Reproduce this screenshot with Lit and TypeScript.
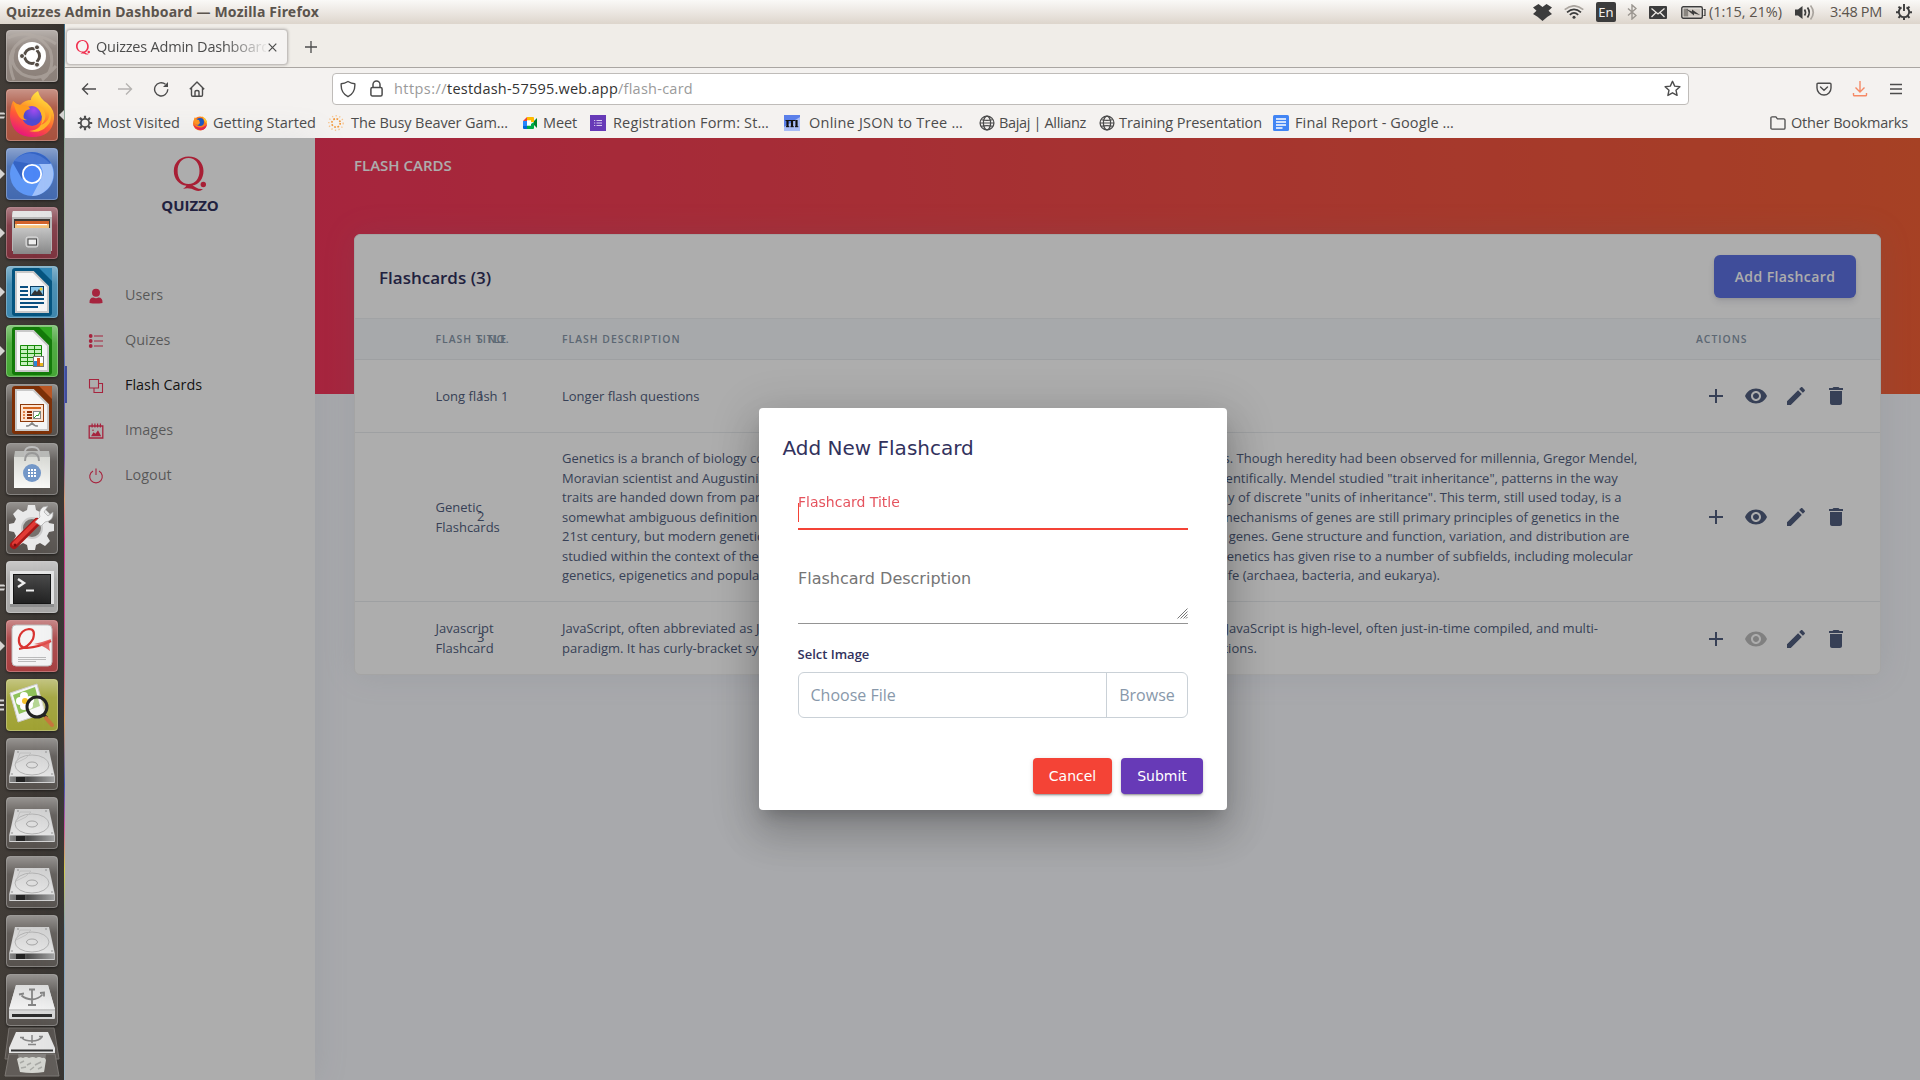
import { LitElement, html, css, svg, nothing } from "lit";
import { customElement, property } from "lit/decorators.js";
import { styleMap } from "lit/directives/style-map.js";

/** One line of text whose letter spacing is adjusted to fill a given width. */
@customElement("fit-label")
class FitLabel extends LitElement {
  @property({ type: Number }) width = 0;
  @property() text = "";
  static styles = css`
    :host { display: block; flex: none; white-space: nowrap; }
    span { display: inline-block; white-space: pre; }
  `;
  updated() {
    const s = this.renderRoot.querySelector("span") as HTMLElement;
    s.style.letterSpacing = "0px";
    const natural = s.getBoundingClientRect().width;
    s.style.letterSpacing = (this.width - natural) / this.text.length + "px";
  }
  render() {
    return html`<span>${this.text}</span>`;
  }
}

/* ---------- desktop launcher ---------- */

const gloss = svg`<rect x=".5" y=".5" width="51" height="51" rx="3.5" fill="url(#gloss)" stroke="#fff" stroke-opacity=".28"/>`;

const officeDoc = (dark: string, mid: string, inner: unknown) => svg`
  <path d="M9 2h29l8 9v36a3 3 0 0 1-3 3H9a3 3 0 0 1-3-3V5a3 3 0 0 1 3-3z" fill="${dark}"/>
  <path d="M33 2h13v13z" fill="${mid}"/>
  <path d="M9 5h19l15 15v27H9z" fill="#c9c9c9"/><path d="M11 7h16l14 14v24H11z" fill="#f7f7f7"/>
  <path d="M28 5l15 15V16L32 5z" fill="${dark}"/>${inner}`;

const drive = svg`
  <path d="M9 12h34l6 27v5a1 1 0 0 1-1 1H4a1 1 0 0 1-1-1v-5z" fill="#d4d4d4"/>
  <path d="M10 12h32l6 26H4z" fill="url(#plate)"/>
  <path d="M3.500 38.500h45v5.500h-45z" fill="url(#edge)"/><path d="M10 39h9v5h-9z" fill="#222"/>
  <ellipse cx="26" cy="27" rx="17" ry="10" fill="none" stroke="#b3b3b3"/>
  <path d="M14 15h11l-5 5-10 5z" fill="none" stroke="#bbb" stroke-width=".8"/>
  <ellipse cx="26" cy="27" rx="5.500" ry="3" fill="#dedede" stroke="#a5a5a5"/>
  <circle cx="12" cy="14" r=".8" fill="#888"/><circle cx="40" cy="14" r=".8" fill="#888"/><circle cx="6" cy="36" r=".8" fill="#888"/><circle cx="46" cy="36" r=".8" fill="#888"/>`;

const usb = svg`
  <path d="M10 11h32l7 25v8a1 1 0 0 1-1 1H4a1 1 0 0 1-1-1v-8z" fill="#d8d8d8"/>
  <path d="M10 11h32l7 24H3z" fill="url(#plate2)"/><path d="M3 35.500h46v1H3z" fill="#b5b5b5"/>
  <rect x="6" y="40" width="40" height="3" fill="#2c2c2c"/>
  <path d="M26 15v15M22 31h8M23 15.500h6M15.500 21.500q4 3.500 10.500 4 6.500-.5 10.500-5" fill="none" stroke="#848484" stroke-width="1.800"/>
  <path d="M13 20.500l5-1M34 19l4-.5v4" fill="none" stroke="#848484" stroke-width="1.800"/>`;

interface Tile { bg: string; art: unknown; left?: number; right?: boolean; }

const tiles: Tile[] = [
  { bg: "#8b8079", art: svg`
    <path d="M2 8Q28-4 44 20 50 40 36 50M50 36Q36 54 16 44 2 34 8 20M8 50Q-2 24 14 12 30 0 50 14" fill="none" stroke="#b5ada7" stroke-width="3" opacity=".6"/>
    <circle cx="26" cy="26" r="14" fill="#fff"/><circle cx="26" cy="26" r="7.500" fill="none" stroke="#554d46" stroke-width="3"/>
    <g stroke="#fff" stroke-width="1.600"><path d="M26 26l-14 0M26 26l7-12M26 26l7 12"/></g><circle cx="26" cy="26" r="5.600" fill="#fff"/>
    <circle cx="16" cy="26" r="2.500" fill="#554d46" stroke="#fff"/><circle cx="31" cy="17.300" r="2.500" fill="#554d46" stroke="#fff"/><circle cx="31" cy="34.700" r="2.500" fill="#554d46" stroke="#fff"/>` },
  { bg: "#a8513d", left: 2, right: true, art: svg`
    <path d="M7 12q3 3 7 4 5-5 11-5 0-5 7-9 2 8 9 12 8 7 7 16-2 18-22 18Q6 47 4 28 4 18 7 12z" fill="url(#fox)"/>
    <circle cx="26" cy="27" r="10" fill="url(#globe)"/>
    <path d="M7 12q3 4 9 4 7 0 8 4-5 1-6 5-2 5 3 6-6 1-9-5-3-5-5-14z" fill="#ff9a1f"/>
    <path d="M27 16q9-1 12 8 2 6-4 12 13-6 6-19 8 12 0 20-7 8-18 5 14-1 13-14-1-8-9-12z" fill="#ffb52a"/>` },
  { bg: "#4269b0", left: 1, art: svg`
    <circle cx="26" cy="26" r="22" fill="#5e97f6"/><path d="M7 15A22 22 0 0 1 45 15L26 16 16 31z" fill="#3564c4"/><path d="M8 13Q24-4 45 16H26z" fill="#4b78d4"/>
    <path d="M45 16a22 22 0 0 1-19 32l9-17q4-8-2-15z" fill="#a1c2fa"/><circle cx="26" cy="26" r="9.200" fill="#4d87f6" stroke="#fff" stroke-width="1.800"/>` },
  { bg: "#7c303b", left: 1, art: svg`
    <path d="M6 6q0-2 2-2h36q2 0 2 2v38H6z" fill="#b8b8b8"/><path d="M6 10l1-6h38l1 6z" fill="#e5e5e5"/><rect x="8" y="12" width="36" height="9" fill="#3d3733"/>
    <path d="M9 14h34v7H9z" fill="#d3632a"/><path d="M9 17h34v4H9z" fill="#f6c37a"/><path d="M11 17h30v1.200H11z" fill="#fff"/>
    <path d="M7 21h38v26H7z" fill="url(#cab)"/><rect x="20" y="30" width="12" height="10" rx="2" fill="#bdbdbd" stroke="#ddd"/><rect x="22" y="32" width="8.500" height="6" fill="#eee" stroke="#444"/>` },
  { bg: "#3c87ae", left: 1, art: officeDoc("#04547f", "#2e86b5", svg`
    <path d="M14 21h8M14 25h8M14 29h8M14 33h24M14 37h24M14 41h18" stroke="#0a4f80" stroke-width="2"/>
    <rect x="24.500" y="20.500" width="13" height="9" fill="#87c6ea" stroke="#0a3f66"/><path d="M25 29l4-5 2 2 2-3 4 6z" fill="#333"/><circle cx="35" cy="23" r="1.500" fill="#f3d02e"/>`) },
  { bg: "#43a632", left: 1, art: officeDoc("#127a08", "#2fa81f", svg`
    <rect x="14" y="20" width="22" height="21" fill="#c5f0bd"/><path d="M14.500 20.500h21v20h-21zM14 24.500h22M14 28.500h22M14 32.500h22M14 36.500h22M21.500 20v21M28.500 20v21" fill="none" stroke="#178a0a"/>
    <rect x="27.500" y="31.500" width="10" height="10" fill="#fff" stroke="#777"/><path d="M28 36h3v5h-3z" fill="#2a86d8"/><path d="M31 33h3v8h-3z" fill="#d8541c"/><path d="M34 38h3v3h-3z" fill="#e8b81c"/>`) },
  { bg: "#56504b", art: officeDoc("#7d2f06", "#bb5622", svg`
    <rect x="14.500" y="20.500" width="23" height="17" fill="#fde3d0" stroke="#8d3a0b"/><path d="M17 24h18" stroke="#d4651f" stroke-width="2"/>
    <path d="M17 28h2M17 31h2M17 34h2" stroke="#e08248" stroke-width="2"/><path d="M21 28h5M21 31h5M21 34h5" stroke="#8d2f05" stroke-width="2"/>
    <rect x="27.500" y="27.500" width="7" height="7" fill="#fff" stroke="#888"/><path d="M28 34l3-3 1 1 2-4" fill="none" stroke="#2a9a2a"/><path d="M26 38v2M20 42q4 0 6-3 2 3 6 3" fill="none" stroke="#888" stroke-width="1.500"/>`) },
  { bg: "#57524e", art: svg`
    <path d="M9 8h34l1 6H8z" fill="#b9bab7"/><path d="M19 16V8q1-4 7-4t7 4v8" fill="none" stroke="#bdbdbd" stroke-width="1.800"/>
    <path d="M8 14h36v31H8z" fill="url(#bag)"/><path d="M19 18q0-8 7-8t7 8" fill="none" stroke="#999" stroke-width="2"/>
    <circle cx="26" cy="30" r="9" fill="#7397c8"/><path d="M22 27h2m1 0h2m1 0h2M22 30h2m1 0h2m1 0h2M22 33h2m1 0h2m1 0h2" stroke="#fff" stroke-width="2"/>` },
  { bg: "#57524e", art: svg`
    <path d="M21 8l1-5h7l1 5 4 2 5-3 5 5-3 5 2 4 5 1v7l-5 1-2 4 3 5-5 5-5-3-4 2-1 5h-7l-1-5-4-2-5 3-5-5 3-5-2-4-5-1v-7l5-1 2-4-3-5 5-5 5 3z" fill="#e9e9e9"/>
    <circle cx="26" cy="26" r="10" fill="#77716d" stroke="#cacaca" stroke-width="2"/>
    <path d="M8 43L31 20" stroke="#a91818" stroke-width="8" stroke-linecap="round"/><path d="M8 42L31 19" stroke="#e23a35" stroke-width="4" stroke-linecap="round"/>
    <path d="M29 20l5-5q-2-6 3-10l5-1-4 6 4 4 5-4q1 9-8 10l-4 4z" fill="#f3f3f3" stroke="#aaa" stroke-width=".7"/><circle cx="9" cy="43" r="1.500" fill="#741010"/>` },
  { bg: "#a8a7a6", left: 2, art: svg`
    <path d="M4 10h44v36H4z" fill="#e6e6e6"/><path d="M4 43h44v3H4z" fill="#8d8d8d"/><rect x="7.500" y="13.500" width="37" height="29" fill="url(#term)" stroke="#141414"/>
    <path d="M12 18l6 4-6 4" fill="none" stroke="#eee" stroke-width="2.400"/><path d="M20 29.500h8" stroke="#eee" stroke-width="2"/>` },
  { bg: "#a83e3f", left: 1, art: svg`
    <rect x="6" y="5" width="40" height="41" rx="4" fill="#f4f4f4" stroke="#bdbdbd"/>
    <path d="M13 29Q22 28 27 19 30 9 23 9 15 10 13 18q-1 10 8 10 12-1 24-7" fill="none" stroke="#d93431" stroke-width="2.200"/><path d="M28 24q9-2 17-5-3 6-1 12-7-6-16-7z" fill="#e2504d" opacity=".85"/>
    <path d="M12 37.500h28M12 39.500h28M12 41.500h18" stroke="#bbb"/>` },
  { bg: "#a0a233", left: 3, art: svg`
    <path d="M4 14l27-9 8 29-27 9z" fill="#f4f4f4" stroke="#ccc"/><path d="M7 16l22-8 5 19-21 8z" fill="#8fc25b"/>
    <g fill="#fff"><circle cx="18" cy="17" r="4"/><circle cx="24" cy="21" r="4"/><circle cx="14" cy="22" r="4"/><circle cx="18" cy="27" r="4"/><circle cx="23" cy="26" r="4"/></g><circle cx="19" cy="22" r="3" fill="#f4c22c"/>
    <circle cx="31" cy="28" r="10" fill="#fff" fill-opacity=".35" stroke="#222" stroke-width="3"/><path d="M38 36l3 3" stroke="#222" stroke-width="3"/><path d="M40 39l6 7" stroke="#c9763a" stroke-width="4" stroke-linecap="round"/>` },
  { bg: "#57524e", art: drive }, { bg: "#57524e", art: drive }, { bg: "#57524e", art: drive }, { bg: "#57524e", art: drive },
  { bg: "#57524e", art: usb },
];

@customElement("desk-launcher")
class DeskLauncher extends LitElement {
  static styles = css`
    :host { display: flex; flex-direction: column; gap: 7px; width: 64px; height: 1056px; box-sizing: border-box; padding-top: 6px; overflow: hidden;
      background: linear-gradient(90deg, #423d38, #3c3733 60%, #35312d); }
    .row { display: flex; align-items: center; height: 52px; flex: none; }
    .side { width: 6px; height: 52px; flex: none; }
    .tile { width: 52px; height: 52px; flex: none; filter: drop-shadow(0 1px 1px rgba(0, 0, 0, .45)); }
    .fold { width: 56px; height: 50px; flex: none; margin: -6px 0 0 4px; }
  `;
  private grads() {
    return svg`<defs>
      <linearGradient id="gloss" x2="0" y2="1"><stop offset="0" stop-color="#fff" stop-opacity=".38"/><stop offset=".35" stop-color="#fff" stop-opacity=".08"/><stop offset="1" stop-color="#fff" stop-opacity="0"/></linearGradient>
      <linearGradient id="plate" x2="0" y2="1"><stop offset="0" stop-color="#d0d0d0"/><stop offset="1" stop-color="#e6e6e6"/></linearGradient>
      <linearGradient id="plate2" x2="0" y2="1"><stop offset="0" stop-color="#dcdcdc"/><stop offset="1" stop-color="#f2f2f2"/></linearGradient>
      <linearGradient id="edge"><stop offset="0" stop-color="#888"/><stop offset=".4" stop-color="#4a4a4a"/><stop offset="1" stop-color="#a5a5a5"/></linearGradient>
      <linearGradient id="cab" x2="0" y2="1"><stop offset="0" stop-color="#c5c5c5"/><stop offset="1" stop-color="#888"/></linearGradient>
      <linearGradient id="bag" x2="0" y2="1"><stop offset="0" stop-color="#d9dad5"/><stop offset="1" stop-color="#fafaf8"/></linearGradient>
      <linearGradient id="term" x2="0" y2="1"><stop offset="0" stop-color="#4a4a4a"/><stop offset="1" stop-color="#202020"/></linearGradient>
      <linearGradient id="fox" x1=".8" y1="0" x2=".35" y2="1"><stop offset="0" stop-color="#fff04a"/><stop offset=".35" stop-color="#ffb02c"/><stop offset=".65" stop-color="#ff5a35"/><stop offset="1" stop-color="#e8167c"/></linearGradient>
      <radialGradient id="globe" cx=".6" cy=".2"><stop offset="0" stop-color="#a44af0"/><stop offset="1" stop-color="#4e4ad0"/></radialGradient>
    </defs>`;
  }
  private marks(n = 0) {
    if (n === 1) return svg`<path d="M0 21l5 5-5 5z" fill="#d6d4d2"/>`;
    if (n === 2) return svg`<path d="M0 23.500h4l1 1v1H0zM0 27.500h5l-1 2H0z" fill="#d6d4d2"/>`;
    if (n === 3) return svg`<path d="M0 20.500h4v2H0zM0 25h4v2H0zM0 29.500h4v2H0z" fill="#d6d4d2"/>`;
    return nothing;
  }
  render() {
    return html`
      ${tiles.map((t) => html`<div class="row">
        <svg class="side" viewBox="0 0 6 52">${this.marks(t.left)}</svg>
        <svg class="tile" viewBox="0 0 52 52">${this.grads()}<rect width="52" height="52" rx="4" fill="${t.bg}"/>${gloss}${t.art}</svg>
        <svg class="side" viewBox="0 0 6 52">${t.right ? svg`<path d="M6 21l-5 5 5 5z" fill="#d6d4d2"/>` : nothing}</svg>
      </div>`)}
      <svg class="fold" viewBox="0 0 56 50">${this.grads()}
        <path d="M5 1h45l5 31H1z" fill="#57524e" stroke="#77726e"/><path d="M5 27h46l4 22H1z" fill="#615c58" stroke="#7d7874"/>
        <path d="M14 27h28l-2 18H16z" fill="#85827f"/><path d="M13 32q3-3 6-1 3-2 6 0 4-2 7 0 3-2 6 0 3-1 4 2l-2 12q-12 2-24 0z" fill="#d4d5d0"/><path d="M16 36l4-2m3 4l4-2m4 2l6-3M17 41l5-1m4 3l4-3m4 2l4-2" stroke="#a9aaa6" stroke-width="1.500"/>
        <path d="M12 5h32l7 16v5H5v-5z" fill="#e6e6e6"/><path d="M7 22.500h42v2H7z" fill="#333"/><path d="M28 8v8M24 17.500h8M18 11q3 3 10 3t10-4M16 10.500h4M35 9.500h4" fill="none" stroke="#868686" stroke-width="1.500"/>
      </svg>`;
  }
}

/* ---------- system panel ---------- */

@customElement("system-panel")
class SystemPanel extends LitElement {
  static styles = css`
    :host { display: flex; align-items: center; height: 24px; box-sizing: border-box; padding: 0 8px 0 6px; color: #5b544d;
      background: linear-gradient(#faf9f7, #ece7e2 50%, #ddd5cc); font: 14.500px/24px "Open Sans", sans-serif; }
    .title { font: 700 14px/24px "Noto Sans", sans-serif; flex: 1; }
    .tray { display: flex; align-items: center; }
    svg { display: block; flex: none; }
    .lang { width: 20px; height: 20px; border-radius: 2px; background: #3c3c3c; color: #f3f1ee; text-align: center; font: 13px/20px "Noto Sans", sans-serif; margin-right: 11px; }
    .clock { margin-right: 14px; }
    .bt, .drop { margin-right: 12px; }
    .mail { margin-right: 14px; }
    .wifi { margin-right: 12px; }
    .bat { margin-right: 3px; }
    .vol { margin: 0 15px 0 13px; }
  `;
  render() {
    return html`
      <div class="title"><fit-label .width=${313} .text=${"Quizzes Admin Dashboard — Mozilla Firefox"}></fit-label></div>
      <div class="tray">
        <svg class="drop" width="19" height="17" viewBox="0 0 19 17" fill="#3c3c3c"><path d="M5.500 0L9.500 3 13.500 0 19 3.600 15.500 6.800 19 10 14.500 12.800 9.500 17 4.500 12.800 0 10 3.500 6.800 0 3.600z"/></svg>
        <svg class="wifi" width="20" height="14" viewBox="0 0 20 14" fill="none" stroke="#3c3c3c" stroke-width="1.700"><path d="M.7 4.700Q10-3 19.300 4.700" stroke="#aaa59f"/><path d="M3 7.300Q10 1.300 17 7.300M5.800 9.800Q10 6 14.200 9.800"/><circle cx="10" cy="12.300" r="1.500" fill="#3c3c3c" stroke="none"/></svg>
        <div class="lang">En</div>
        <svg class="bt" width="10" height="16" viewBox="0 0 10 16" fill="none" stroke="#9a958f" stroke-width="1.400"><path d="M1 4.500l8 7L5 15V1l4 3.500-8 7"/></svg>
        <svg class="mail" width="18" height="13" viewBox="0 0 18 13"><rect width="18" height="13" rx="1" fill="#3c3c3c"/><path d="M2.500 2.500L9 8l6.500-5.500M2.500 11L7 6.500M15.500 11L11 6.500" fill="none" stroke="#ece8e3" stroke-width="1.300"/></svg>
        <svg class="bat" width="25" height="13" viewBox="0 0 25 13"><rect x=".8" y=".8" width="20.500" height="11.400" rx="1.500" fill="none" stroke="#3c3c3c" stroke-width="1.400"/><rect x="2.500" y="2.500" width="5" height="8" fill="#8a8680"/><path d="M7.500 2.500h12v8h-12z" fill="#cfc9c2"/><path d="M22.500 3.500h1.500v6h-1.500" fill="none" stroke="#3c3c3c" stroke-width="1.200"/><path d="M5 3l6 2.500V3.500l8 5.500-6-1.500v2z" fill="#3c3c3c"/></svg>
        <fit-label .width=${73} .text=${"(1:15, 21%)"}></fit-label>
        <svg class="vol" width="20" height="17" viewBox="0 0 20 17"><path d="M0 5.500h3L7.500 2v13L3 11.500H0z" fill="#3c3c3c"/><path d="M9.500 5.500q2 3 0 6M12.500 3.500q3.500 5 0 10" fill="none" stroke="#3c3c3c" stroke-width="1.700"/><path d="M15.500 1.500q5.500 7 0 14" fill="none" stroke="#aaa59f" stroke-width="1.700"/></svg>
        <div class="clock"><fit-label .width=${52} .text=${"3:48 PM"}></fit-label></div>
        <svg width="16" height="16" viewBox="0 0 16 16" fill="none" stroke="#3c3c3c"><path d="M5.500 3.400a5.200 5.200 0 1 0 5 0" stroke-width="1.900"/><path d="M8 0v7" stroke-width="1.900"/><path d="M8 13.500V16M2.600 8.200H0M13.400 8.200H16M4.300 12l-1.800 1.900M11.700 12l1.800 1.900M4.300 4.400L2.500 2.600M11.700 4.400l1.800-1.800" stroke-width="2"/></svg>
      </div>`;
  }
}

/* ---------- browser chrome ---------- */

const globeIcon = svg`<g fill="none" stroke="#4c4c4c" stroke-width="1.300"><circle cx="8" cy="8" r="6.900"/><ellipse cx="8" cy="8" rx="3.600" ry="6.900"/><path d="M1 8h14M2.500 4.700Q8 6 13.500 4.700M2.500 11.300Q8 10 13.500 11.300" stroke-width="1.100"/></g>`;

interface Bookmark { icon: unknown; label: string; slot: number; lead: number; width: number; }

const bookmarks: Bookmark[] = [
  { label: "Most Visited", slot: 115, lead: 20, width: 83, icon: svg`<circle cx="8" cy="8" r="4.200" fill="none" stroke="#4c4c4c" stroke-width="1.800"/><path d="M8 .8v3M8 12.200v3M.8 8h3M12.200 8h3M2.900 2.900L5 5M11 11l2.100 2.100M13.100 2.900L11 5M5 11l-2.100 2.100" stroke="#4c4c4c" stroke-width="2.200"/>` },
  { label: "Getting Started", slot: 136, lead: 21, width: 103, icon: svg`<circle cx="8" cy="8.500" r="7" fill="#ff7a1a"/><path d="M1 9q2 6 8 6.300Q14 15 15 9q-1 2-4 3-6 2-10-3z" fill="#e8254a"/><path d="M10 1q5 3 5 8-3-3-4-6z" fill="#ffc92c"/><circle cx="8" cy="7" r="4" fill="#1c55c0"/><path d="M3 2q1 3 4 3l1 3-2 2Q1 9 2 4z" fill="#ff9420"/>` },
  { label: "The Busy Beaver Gam…", slot: 194, lead: 23, width: 157, icon: svg`<g fill="none" stroke="#f2983a" stroke-width="1.700" stroke-dasharray="1.700 1.600"><circle cx="8" cy="8" r="4.200"/><circle cx="8" cy="8" r="7.200" stroke="#f7c48e" stroke-width="1.400" stroke-dasharray="1.300 2.400"/></g>` },
  { label: "Meet", slot: 68, lead: 21, width: 34, icon: svg`<path d="M1 6l4-4v4z" fill="#ea4335"/><path d="M1 6h4v5H1z" fill="#2684fc"/><path d="M1 11h4v3H2q-1 0-1-1z" fill="#0066da"/><path d="M5 2h6q1 0 1 1v4H9V5.500H5z" fill="#ffba00"/><path d="M5 14v-3.500h4V9l3-2v6q0 1-1 1z" fill="#00ac47"/><path d="M5 5.500h4v5H5z" fill="#fff"/><path d="M12 6l3-3v10l-3-3z" fill="#00832d"/>` },
  { label: "Registration Form: St…", slot: 194, lead: 23, width: 156, icon: svg`<path d="M0 0h16v16H0z" fill="#673ab7"/><path d="M4 5.500h1.200M4 8h1.200M4 10.500h1.200M6.500 5.500H12M6.500 8H12M6.500 10.500H12" stroke="#d6c8ee" stroke-width="1.100"/>` },
  { label: "Online JSON to Tree …", slot: 195, lead: 25, width: 154, icon: svg`<path d="M0 0h16v16H0z" fill="#a9bdf7"/><path d="M0 0h16v2L0 12z" fill="#5b80ea"/><path d="M3.500 5v7M8 5v7M12.500 5v7" stroke="#111" stroke-width="2.200"/><path d="M1.500 5.500h10M2 11.700h3.300M6.500 11.700h3.300M11 11.700h3.300" stroke="#111"/>` },
  { label: "Bajaj | Allianz", slot: 120, lead: 20, width: 87, icon: globeIcon },
  { label: "Training Presentation", slot: 174, lead: 20, width: 143, icon: globeIcon },
  { label: "Final Report - Google …", slot: 200, lead: 22, width: 159, icon: svg`<rect width="16" height="16" rx="1.500" fill="#4285f4"/><path d="M3 4h10M3 7h10M3 10h10M3 13h6.500" stroke="#fff" stroke-width="1.700"/>` },
];

@customElement("browser-chrome")
class BrowserChrome extends LitElement {
  static styles = css`
    :host { display: block; height: 114px; background: #f4f2f0; color: #4c4c4c; font: 14.500px/20px "Open Sans", sans-serif; }
    svg { display: block; flex: none; }
    .tabs { display: flex; align-items: center; height: 44px; background: #f0ede8; border-bottom: 1px solid #aaa6a2; padding: 4px 0 1px 1px; box-sizing: border-box; }
    .tab { width: 222px; height: 36px; box-sizing: border-box; background: #f5f3f2; border-radius: 4px; border: 1px solid #c4c0bd; box-shadow: 0 0 3px rgba(0, 0, 0, .28); display: flex; align-items: center; padding-left: 9px; }
    .tabtext { width: 170px; margin: 0 2px 0 6px; overflow: hidden; mask-image: linear-gradient(90deg, #000 75%, transparent 102%); -webkit-mask-image: linear-gradient(90deg, #000 75%, transparent 102%); }
    .plus { margin-left: 17px; }
    .nav { display: flex; align-items: center; height: 39px; padding: 1px 16px 0 16px; }
    .nav .b { margin-right: 20px; }
    .url { display: flex; align-items: center; height: 32px; width: 1357px; flex: none; box-sizing: border-box; background: #fff; border: 1px solid #bfbcb9; border-radius: 4px; margin-left: 127px; padding: 0 7px; font-size: 14.500px; color: #9a9a9a; }
    .lock { margin: 0 11px 0 14px; }
    .url .dark { color: #333; }
    .grow { flex: 1; }
    .right { display: flex; align-items: center; margin-left: auto; gap: 20px; }
    .marks { display: flex; align-items: center; height: 30px; padding: 0 12px 0 12px; border-bottom: 1px solid #c9c6c3; }
    .mark { display: flex; align-items: center; flex: none; }
    .folder { margin-right: 5px; }
  `;
  render() {
    return html`
      <div class="tabs">
        <div class="tab">
          <svg width="14" height="15" viewBox="0 0 34 36" fill="#f0304f"><path fill-rule="evenodd" d="M16 0C6 0 0 7 0 15s6 14 15 15l-4 3q8-2 13 2 5 1 7-2-4 1-9-3 9-5 9-14C31 7 25 0 16 0zm0 2c7 0 11 6 11 13s-4 13-11 13S4 22 4 15 9 2 16 2z"/><circle cx="31" cy="29" r="3"/></svg>
          <div class="tabtext"><fit-label .width=${174} .text=${"Quizzes Admin Dashboard"}></fit-label></div>
          <svg width="9" height="9" viewBox="0 0 9 9"><path d="M.7.7l7.600 7.600M8.300.7L.7 8.300" stroke="#4c4c4c" stroke-width="1.200"/></svg>
        </div>
        <svg class="plus" width="12" height="12" viewBox="0 0 12 12"><path d="M6 0v12M0 6h12" stroke="#4c4c4c" stroke-width="1.300"/></svg>
      </div>
      <div class="nav">
        <svg class="b" width="16" height="16" viewBox="0 0 16 16" fill="none" stroke="#4c4c4c" stroke-width="1.400"><path d="M15 8H1.500M7 2.500L1.500 8 7 13.500"/></svg>
        <svg class="b" width="16" height="16" viewBox="0 0 16 16" fill="none" stroke="#b5b3b1" stroke-width="1.400"><path d="M1 8h13.500M9 2.500L14.500 8 9 13.500"/></svg>
        <svg class="b" width="16" height="16" viewBox="0 0 16 16" fill="none" stroke="#4c4c4c" stroke-width="1.400"><path d="M14.800 8.300A6.600 6.600 0 1 1 12.500 3.300"/><path d="M15 1v5h-5z" fill="#4c4c4c" stroke="none"/></svg>
        <svg width="16" height="16" viewBox="0 0 16 16" fill="none" stroke="#4c4c4c" stroke-width="1.400" stroke-linejoin="round"><path d="M.8 8.200L8 1l7.200 7.200M2.500 7v7q0 1.200 1.200 1.200h8.600q1.200 0 1.200-1.200V7M6 15V11q0-1.500 2-1.500t2 1.500v4"/></svg>
        <div class="url">
          <svg width="16" height="18" viewBox="0 0 16 18" fill="none" stroke="#4c4c4c" stroke-width="1.400" stroke-linejoin="round"><path d="M8 1.500q3.500 2 6.800 2.300Q15.500 13 8 16.700.5 13 1.200 3.800 4.500 3.500 8 1.500z"/></svg>
          <svg class="lock" width="13" height="17" viewBox="0 0 13 17" fill="none" stroke="#4c4c4c" stroke-width="1.500"><rect x=".9" y="7.500" width="11.200" height="8.500" rx="1.500"/><path d="M3 7.500V4.500a3.500 3.500 0 0 1 7 0v3"/></svg>
          <fit-label .width=${53} .text=${"https://"}></fit-label><fit-label class="dark" .width=${171} .text=${"testdash-57595.web.app"}></fit-label><fit-label .width=${75} .text=${"/flash-card"}></fit-label>
          <span class="grow"></span>
          <svg width="17" height="17" viewBox="0 0 17 17" fill="none" stroke="#4c4c4c" stroke-width="1.400" stroke-linejoin="round"><path d="M8.500 1.300l2.200 4.800 5.200.6-3.900 3.500 1.100 5.200-4.600-2.600-4.600 2.600L5 10.200 1.100 6.700l5.200-.6z"/></svg>
        </div>
        <div class="right">
          <svg width="16" height="16" viewBox="0 0 16 16" fill="none" stroke="#4c4c4c" stroke-width="1.400"><path d="M1 3.200q0-1 1-1h12q1 0 1 1V7a7 7 0 0 1-14 0z"/><path d="M4.500 6L8 9.300 11.500 6" stroke-linecap="round"/></svg>
          <svg width="16" height="16" viewBox="0 0 16 16" fill="none" stroke="#f58a66" stroke-width="1.400"><path d="M8 0v11M3.500 6.500L8 11l4.500-4.500M1.500 12v2q0 .8 1 .8h11q1 0 1-.8v-2"/></svg>
          <svg width="16" height="16" viewBox="0 0 16 16" stroke="#4c4c4c" stroke-width="1.300"><path d="M2 3.500h12M2 8h12M2 12.500h12"/></svg>
        </div>
      </div>
      <div class="marks">
        ${bookmarks.map((b) => html`<div class="mark" style=${styleMap({ width: b.slot + "px" })}>
          <svg width="16" height="16" viewBox="0 0 16 16" style=${styleMap({ marginRight: b.lead - 16 + "px" })}>${b.icon}</svg>
          <fit-label .width=${b.width} .text=${b.label}></fit-label></div>`)}
        <span class="grow"></span>
        <svg class="folder" width="16" height="14" viewBox="0 0 16 14" fill="none" stroke="#4c4c4c" stroke-width="1.300"><path d="M.9 2q0-1.200 1.200-1.200h3.800l1.500 2h6.400q1.200 0 1.200 1.200v8q0 1.200-1.200 1.200H2.100Q.9 13.200.9 12z"/></svg>
        <fit-label .width=${117} .text=${"Other Bookmarks"}></fit-label>
      </div>`;
  }
}

/* ---------- dashboard ---------- */

const nav = [
  { label: "Users", icon: svg`<circle cx="8" cy="4.800" r="4"/><path d="M1.500 15q-.3-5.500 4-5.500 2.500 1.300 5 0 4.300 0 4 5.500-6.500 1-13 0z"/>` },
  { label: "Quizes", icon: svg`<circle cx="2.700" cy="3" r="1.900"/><circle cx="2.700" cy="8" r="1.900"/><circle cx="2.700" cy="13" r="1.900"/><path d="M6 2.500h9v1H6zM6 7.500h9v1H6zM6 12.500h9v1H6z"/>` },
  { label: "Flash Cards", active: true, icon: svg`<path fill="none" stroke="#f5365c" stroke-width="1.100" d="M1.500 1.500h9v8.500h-9zM10.500 5.500H14.500v9H6V10"/>` },
  { label: "Images", icon: svg`<path fill="none" stroke="#f5365c" stroke-width="1.300" d="M1.200 3h13.600v12H1.200z"/><path d="M3.500.5h1.200v4H3.500zM6.300.5h1.200v4H6.300zM9 .5h1.200v4H9zM11.800.5h1.200v4h-1.200zM3 13.200l2.500-4 2 1.500 2.500-3.500 3.200 6z"/><circle cx="5" cy="7.300" r=".8"/>` },
  { label: "Logout", icon: svg`<path fill="none" stroke="#f5365c" stroke-width="1.100" d="M5 3a6.300 6.300 0 1 0 6 0M8 .5v6.500"/>` },
];

const rows = [
  { no: 1, title: "Long flash 1", lines: ["Longer flash questions"], view: true },
  { no: 2, title: "Genetic Flashcards", view: true, lines: [
    "Genetics is a branch of biology concerned with the study of genes, genetic variation, and heredity in organisms. Though heredity had been observed for millennia, Gregor Mendel,",
    "Moravian scientist and Augustinian friar working in the 19th century in Brno, was the first to study genetics scientifically. Mendel studied \"trait inheritance\", patterns in the way",
    "traits are handed down from parents to offspring. He observed that organisms (pea plants) inherit traits by way of discrete \"units of inheritance\". This term, still used today, is a",
    "somewhat ambiguous definition of what is referred to as a gene. Trait inheritance and molecular inheritance mechanisms of genes are still primary principles of genetics in the",
    "21st century, but modern genetics has expanded beyond inheritance to studying the function and behavior of genes. Gene structure and function, variation, and distribution are",
    "studied within the context of the cell, the organism (e.g. dominance), and within the context of a population. Genetics has given rise to a number of subfields, including molecular",
    "genetics, epigenetics and population genetics. Organisms studied within the broad field span the domains of life (archaea, bacteria, and eukarya).",
  ] },
  { no: 3, title: "Javascript Flashcard", view: false, lines: [
    "JavaScript, often abbreviated as JS, is a programming language that conforms to the ECMAScript specification. JavaScript is high-level, often just-in-time compiled, and multi-",
    "paradigm. It has curly-bracket syntax, dynamic typing, prototype-based object-orientation, and first-class functions.",
  ] },
];

const P = {
  add: "M19 13h-6v6h-2v-6H5v-2h6V5h2v6h6v2z",
  eye: "M12 4.500C7 4.500 2.730 7.610 1 12c1.730 4.390 6 7.500 11 7.500s9.270-3.110 11-7.500c-1.730-4.390-6-7.500-11-7.500zM12 17c-2.760 0-5-2.240-5-5s2.240-5 5-5 5 2.240 5 5-2.240 5-5 5zm0-8c-1.660 0-3 1.340-3 3s1.340 3 3 3 3-1.340 3-3-1.340-3-3-3z",
  edit: "M3 17.250V21h3.750L17.810 9.940l-3.750-3.750L3 17.250zM20.710 7.040c.39-.39.39-1.020 0-1.410l-2.340-2.340c-.39-.39-1.020-.39-1.410 0l-1.830 1.830 3.750 3.750 1.830-1.830z",
  trash: "M6 19c0 1.100.9 2 2 2h8c1.100 0 2-.9 2-2V7H6v12zM19 4h-3.500l-1-1h-5l-1 1H5v2h14V4z",
};

@customElement("quiz-dashboard")
class QuizDashboard extends LitElement {
  static styles = css`
    :host { display: grid; grid-template-columns: 250px 1fr; height: 942px; background: #f8f9fe; font-family: "Open Sans", sans-serif; color: #525f7f; }
    svg { display: block; flex: none; }
    aside { background: #fff; box-shadow: 0 0 32px rgba(136, 152, 170, .15); }
    .brand { display: flex; flex-direction: column; align-items: center; padding-top: 18px; color: #32325d; font: 700 15px/20px "Open Sans"; height: 120px; gap: 3px; }
    .item { display: flex; align-items: center; height: 37px; margin-bottom: 8px; padding-left: 22px; border-left: 2px solid transparent; color: rgba(0, 0, 0, .5); font-size: 14.400px; }
    .item.active { border-color: #5e72e4; color: rgba(0, 0, 0, .9); }
    .item svg { margin: 3px 21px 0 -1px; }
    main { display: grid; grid-template-rows: 256px 1fr; }
    .hero { background: linear-gradient(87deg, #f5365c, #f56036); padding: 16px 39px 0; color: #fff; font: 600 15px/22px "Open Sans"; }
    .body { padding: 0 39px; margin-top: -160px; }
    .card { background: #fff; border: 1px solid #f2f2f2; border-radius: 6px; box-shadow: 0 0 32px rgba(136, 152, 170, .15); overflow: hidden; }
    .hero, .body { position: relative; }
    .head { height: 84px; display: flex; align-items: center; justify-content: space-between; padding: 0 24px; border-bottom: 1px solid #edf0f3; box-sizing: border-box; }
    .head h3 { margin: 0; padding-top: 1px; font: 600 17px/25px "Open Sans"; color: #32325d; }
    .add { background: #5e72e4; color: #fff; border-radius: 6px; height: 43px; width: 142px; text-align: center; font: 600 14px/43px "Open Sans"; letter-spacing: .4px; box-shadow: 0 4px 6px rgba(50, 50, 93, .11), 0 1px 3px rgba(0, 0, 0, .08); }
    .row { display: grid; grid-template-columns: 80.500px 126.500px 1fr 184px; align-items: center; border-bottom: 1px solid #e9ecef; font-size: 13px; line-height: 19.500px; box-sizing: border-box; }
    .row:last-child { border: 0; }
    .th { height: 41px; background: #f6f9fc; color: #8898aa; font: 600 10.400px/16px "Open Sans"; letter-spacing: 1px; text-transform: uppercase; }
    .r1 { height: 73px; } .r3 { height: 72px; } .r2 { height: 169px; }
    .name { position: relative; display: flex; align-items: center; }
    .name .t { width: 80px; }
    .th .name .t { width: auto; }
    .r1 .name, .r1 .lines { padding-top: 2px; } .r2 .name, .r2 .lines { padding-top: 1px; }
    .r3 .name, .r3 .lines { padding-top: 1px; }
    .r3 .acts { padding-top: 1px; }
    .no { position: absolute; left: 41.500px; top: 50%; transform: translateY(-50%); }
    .lines { white-space: nowrap; }
    .acts { display: flex; gap: 16px; padding-left: 8px; color: #525f7f; }
    .off { color: #bdbdbd; }
  `;
  render() {
    return html`
      <aside>
        <div class="brand">
          <svg width="34" height="36" viewBox="0 0 34 36" fill="#f82f4e"><path fill-rule="evenodd" d="M15.500.5C6.500.5.800 7 .8 15S6 29 13.500 29.800q-1.500 2-3.500 3 7-1.500 12 1.500 5 1.700 8-1.300-4 .5-7-1.500-1.500-1-3.500-1.900C26 28.500 30.500 22.500 30.500 15 30.500 6.500 24.500.5 15.500.5zm0 1.600c7 0 11 5.700 11 12.900s-4 13.100-11 13.100S4.600 22.200 4.600 15 8.500 2.100 15.500 2.100z"/><circle cx="30.300" cy="28.500" r="2.700"/></svg>
          <span>QUIZZO</span>
        </div>
        ${nav.map((n) => html`<div class="item ${n.active ? "active" : ""}"><svg width="16" height="16" viewBox="0 0 16 16" fill="#f5365c">${n.icon}</svg>${n.label}</div>`)}
      </aside>
      <main>
        <div class="hero">FLASH CARDS</div>
        <div class="body">
          <div class="card">
            <div class="head"><h3>Flashcards (3)</h3><div class="add">Add Flashcard</div></div>
            <div class="row th"><span></span><div class="name"><span class="t">Flash Title</span><span class="no">S No.</span></div><span>Flash Description</span><span>Actions</span></div>
            ${rows.map((r) => html`<div class="row r${r.no}"><span></span>
              <div class="name"><span class="t">${r.title}</span><span class="no">${r.no}</span></div>
              <div class="lines">${r.lines.map((l) => html`<div>${l}</div>`)}</div>
              <div class="acts">${[P.add, P.eye, P.edit, P.trash].map((d) => html`<svg class=${d === P.eye && !r.view ? "off" : ""} width="24" height="24" viewBox="0 0 24 24" fill="currentColor"><path d=${d}/></svg>`)}</div>
            </div>`)}
          </div>
        </div>
      </main>`;
  }
}

@customElement("flash-dialog")
class FlashDialog extends LitElement {
  static styles = css`
    :host { display: block; width: 468px; height: 402px; box-sizing: border-box; background: #fff; border-radius: 4px; padding: 24px; font-family: "DejaVu Sans", sans-serif;
      box-shadow: 0 11px 15px -7px rgba(0, 0, 0, .2), 0 24px 38px 3px rgba(0, 0, 0, .14), 0 9px 46px 8px rgba(0, 0, 0, .12); }
    h2 { margin: 0 0 0 -.5px; font: 400 20px/32px "DejaVu Sans"; color: #32325d; }
    .form { padding: 0 15px; }
    .field { height: 48px; margin-top: 18px; border-bottom: 2px solid #f44336; position: relative; padding-top: 10px; box-sizing: border-box; font-size: 14px; line-height: 20px; color: #e23c48; }
    .field span { opacity: .88; }
    .caret { position: absolute; left: 0; top: 21px; width: 1px; height: 19px; background: #f44336; }
    .area { height: 62px; margin-top: 32px; border-bottom: 1px solid #949494; box-sizing: border-box; display: flex; justify-content: space-between; font-size: 16px; line-height: 34px; color: #757575; }
    .area svg { align-self: flex-end; margin-bottom: 4px; }
    .cap { margin: 19px 0 0 -.5px; font: 600 13px/22px "Open Sans"; color: #32325d; }
    .file { display: flex; height: 46px; box-sizing: border-box; margin-top: 7px; border: 1px solid #cad1d7; border-radius: 6px; font: 16px/44px "Open Sans"; color: #8898aa; }
    .file .c { flex: 1; padding-left: 11.500px; } .file .b { border-left: 1px solid #cad1d7; width: 80px; text-align: center; }
    .btns { display: flex; justify-content: flex-end; gap: 9px; margin-top: 40px; }
    .btn { height: 36px; border-radius: 4px; color: #fff; font-size: 14px; line-height: 36px; text-align: center; box-shadow: 0 3px 1px -2px rgba(0, 0, 0, .2), 0 2px 2px rgba(0, 0, 0, .14), 0 1px 5px rgba(0, 0, 0, .12); }
    .cancel { width: 79px; background: #f44336; } .submit { width: 82px; background: #673ab7; }
  `;
  render() {
    return html`
      <h2>Add New Flashcard</h2>
      <div class="form">
        <div class="field"><span>Flashcard Title</span><i class="caret"></i></div>
        <div class="area">Flashcard Description<svg width="11" height="11" viewBox="0 0 11 11"><path d="M.5 10.500l10-10M3.500 10.500l7-7M6.500 10.500l4-4M9 10.500L10.500 9" stroke="#777" stroke-width="1"/></svg></div>
        <div class="cap">Selct Image</div>
        <div class="file"><span class="c">Choose File</span><span class="b">Browse</span></div>
      </div>
      <div class="btns"><div class="btn cancel">Cancel</div><div class="btn submit">Submit</div></div>`;
  }
}

@customElement("app-root")
class AppRoot extends LitElement {
  static styles = css`
    :host { display: block; width: 1920px; height: 1080px; overflow: hidden; }
    .desk { display: grid; grid-template-columns: 64px 1px 1855px; height: 1056px; }
    .strip { background: linear-gradient(#3a6a86 0, #8aa596 8%, #a9b7a0 20%, #b7a1c8 27%, #4a5fb8 33%, #6b4aa8 41%, #e0a070 45%, #d0388c 49%, #c2508c 60%, #e0a060 66%, #3f51b5 72%, #d04fa0 76%, #d9d04a 80%, #7aa0c0 86%, #9fb6c4 100%); }
    .view { position: relative; height: 942px; }
    .veil { position: absolute; inset: 0; background: rgba(0, 0, 0, .32); }
    .dialog { position: absolute; left: 694px; top: 270px; }
  `;
  render() {
    return html`
      <system-panel></system-panel>
      <div class="desk">
        <desk-launcher></desk-launcher><div class="strip"></div>
        <div>
          <browser-chrome></browser-chrome>
          <div class="view"><quiz-dashboard></quiz-dashboard><div class="veil"></div><flash-dialog class="dialog"></flash-dialog></div>
        </div>
      </div>`;
  }
}
